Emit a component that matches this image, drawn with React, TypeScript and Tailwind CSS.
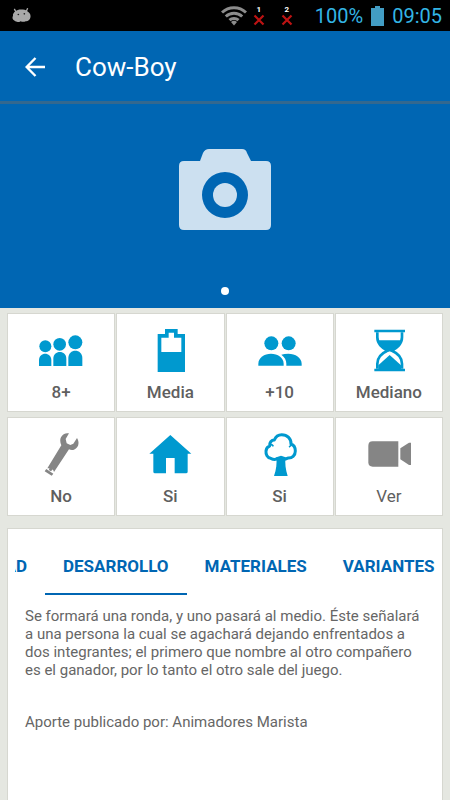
import type { ReactNode } from "react";

const BLUE = "#0099cf";
const GREY = "#858585";

function PeopleIcon() {
  return (
    <svg viewBox="118 87 132 132" className="size-11" fill={BLUE} aria-hidden="true">
      <circle cx="137" cy="139" r="18" />
      <circle cx="180" cy="133" r="19" />
      <circle cx="227" cy="127" r="21" />
      <path d="M118 198v-18c0-12 9-19 18.500-19s18.500 7 18.500 19v18z" />
      <path d="M161 198v-22c0-13 9-20 19.500-20s19.500 7 19.500 20v22z" />
      <path d="M206 198v-24c0-14 10-22 21-22s21 8 21 22v24z" />
    </svg>
  );
}

function BatteryIcon() {
  return (
    <svg viewBox="444 87 132 132" className="size-11" fill={BLUE} aria-hidden="true">
      <path
        fillRule="evenodd"
        d="M495 87h38v15h22v114h-82V102h22zM506 98v15h-22v43h60v-43h-22V98z"
      />
    </svg>
  );
}

function PairIcon() {
  return (
    <svg viewBox="98 87 132 132" className="size-11" fill={BLUE} aria-hidden="true">
      <circle cx="138" cy="130" r="21" />
      <circle cx="190" cy="130" r="21" />
      <path d="M99 197v-6c0-18 18-30 38-30s38 12 38 30v6z" />
      <path d="M168 164c6-2 13-3 21-3 21 0 40 12 40 30v6h-46v-6c0-11-5-20-15-27z" />
    </svg>
  );
}

function HourglassIcon() {
  return (
    <svg viewBox="425 87 132 132" className="size-11" fill={BLUE} aria-hidden="true">
      <path d="M447 89h92v8h-92zM447 206h92v8h-92z" />
      <path
        d="M456 97v15c0 20 14 30 30 40-18 8-30 22-30 39v15M530 97v15c0 20-14 30-30 40 18 8 30 22 30 39v15"
        fill="none"
        stroke={BLUE}
        strokeWidth="8"
      />
      <path d="M457 121h72c-4 15-17 23-28 31h-16c-11-8-24-16-28-31z" />
      <path d="M482 154c6-4 16-4 22 0" fill="none" stroke={BLUE} strokeWidth="7" />
      <path d="M459 207v-11l34-31 34 31v11z" />
    </svg>
  );
}

function WrenchIcon() {
  return (
    <svg viewBox="118 69 132 132" className="size-11" fill={GREY} aria-hidden="true">
      <path d="M208 70l-10 17 3 13 11 5 9-4 11-17c9 15 4 30-9 35-6 2-11 1-15-1l-45 68c-1-7-8-12-20-11l42-69c-4-9-5-19 1-27 5-8 13-11 22-9z" />
      <path d="M140 177l21 14-5 6-21-13z" />
      <circle cx="153" cy="178" r="5" />
    </svg>
  );
}

function HouseIcon() {
  return (
    <svg viewBox="444 69 132 132" className="size-11" fill={BLUE} aria-hidden="true">
      <path d="M511 75l63 56h-11v54q0 5-5 5h-34v-46h-26v46h-33q-5 0-5-5v-54h-12z" />
    </svg>
  );
}

function TreeIcon() {
  return (
    <svg viewBox="98 69 132 132" className="size-11" fill={BLUE} aria-hidden="true">
      <path
        d="M158 145c-7 5-16 3-22 0-10-1-15-12-14-22 1-8 5-13 11-15-1-10 5-18 14-18 4-10 12-16 22-16 17 0 29 12 28 28 8 3 13 11 13 21 0 14-10 22-22 21-6 4-14 4-20 0"
        fill="none"
        stroke={BLUE}
        strokeWidth="9"
        strokeLinejoin="round"
      />
      <path d="M132 105c6-2 10 0 12 4M198 101c0 5-3 8-7 10" fill="none" stroke={BLUE} strokeWidth="5" />
      <path d="M153 142l14-5 14 5c-3 18 0 38 6 56h-41c7-18 9-38 7-56z" />
    </svg>
  );
}

function VideoIcon() {
  return (
    <svg viewBox="425 69 132 132" className="size-11" fill={GREY} aria-hidden="true">
      <path d="M442 94h77v76h-77q-13 0-13-13v-50q0-13 13-13z" />
      <path d="M557 98v67h-6l-26-17v-33l26-17z" />
    </svg>
  );
}

function AndroidIcon() {
  return (
    <svg viewBox="38 26 60 44" className="h-[15px] w-5" fill="#a9a9a9" aria-hidden="true">
      <path d="M45 28l5 10M85 26l-4 9" stroke="#a9a9a9" strokeWidth="4" />
      <path d="M48 36c6-6 14-7 20-6 8-1 14 2 18 7 7 4 9 12 7 18-2 7-8 11-14 10-5 2-10 2-15 0-6 4-14 3-18-1-7-4-8-9-5-15-1-5 2-10 7-13z" />
      <circle cx="57" cy="45" r="2.500" fill="#222" />
      <circle cx="75" cy="43" r="2.500" fill="#222" />
    </svg>
  );
}

function WifiIcon() {
  return (
    <svg viewBox="0 0 26 20" className="h-5 w-[26px]" aria-hidden="true">
      <g fill="none" stroke="#8c8c8c" strokeWidth="3">
        <path d="M1 6.500a17.500 17.500 0 0 1 24 0" />
        <path d="M4.800 10.500a12 12 0 0 1 16.400 0" />
        <path d="M8.500 14.200a6.500 6.500 0 0 1 9 0" />
      </g>
      <path d="M13 19.500l-3-3.500a4.500 4.500 0 0 1 6 0z" fill="#8c8c8c" />
    </svg>
  );
}

function NoSignal({ slot }: { slot: string }) {
  return (
    <span className="flex w-3 flex-col items-center">
      <span className="text-[8px] leading-[8px] font-bold text-white">{slot}</span>
      <svg viewBox="0 0 12 12" className="size-3" aria-hidden="true">
        <path d="M1.500 1.500l9 9M10.500 1.500l-9 9" stroke="#bd1313" strokeWidth="2.200" />
      </svg>
    </span>
  );
}

type Fact = { label: string; icon: ReactNode; light?: boolean };

const facts: Fact[] = [
  { label: "8+", icon: <PeopleIcon /> },
  { label: "Media", icon: <BatteryIcon /> },
  { label: "+10", icon: <PairIcon /> },
  { label: "Mediano", icon: <HourglassIcon /> },
  { label: "No", icon: <WrenchIcon /> },
  { label: "Si", icon: <HouseIcon /> },
  { label: "Si", icon: <TreeIcon /> },
  { label: "Ver", icon: <VideoIcon />, light: true },
];

const tabs = ["DESARROLLO", "MATERIALES", "VARIANTES"];

export default function App() {
  return (
    <div className="flex min-h-screen flex-col bg-[#e5e7e1] font-['Roboto',sans-serif]">
      <div className="flex h-[31px] items-center bg-black pr-2 pl-3 text-xl text-[#33b5e5]">
        <AndroidIcon />
        <div className="ml-auto flex items-center">
          <WifiIcon />
          <div className="mr-[22px] ml-[6px] flex gap-4">
            <NoSignal slot="1" />
            <NoSignal slot="2" />
          </div>
          <span>100%</span>
          <svg viewBox="0 0 13 20" className="mx-2 h-5 w-[13px]" fill="#429dc4" aria-hidden="true">
            <path d="M4 0h5v2h4v18H0V2h4z" />
          </svg>
          <span>09:05</span>
        </div>
      </div>

      <header className="flex h-[73px] items-center border-b-[3px] border-[#33688f] bg-[#0066b3] pt-px pl-[25px] text-white">
        <button type="button" aria-label="Volver" className="mr-[30px]">
          <svg viewBox="0 0 20 20" className="size-5" fill="none" stroke="white" strokeWidth="2.400" aria-hidden="true">
            <path d="M20 10H2M10.500 1L1.600 10l8.900 9" />
          </svg>
        </button>
        <h1 className="text-[26px] leading-8">Cow-Boy</h1>
      </header>

      <section className="flex h-[204px] flex-col items-center bg-[#0066b3] pt-[45px]">
        <svg viewBox="0 0 92 81" className="h-[81px] w-[92px]" fill="#cce0f0" aria-hidden="true">
          <path
            fillRule="evenodd"
            d="M5 12h16l3-8q2-4 6-4h33q4 0 5 4l4 8h15q5 0 5 5v59q0 5-5 5H5q-5 0-5-5V17q0-5 5-5zM46 23a23 23 0 1 0 0 46a23 23 0 1 0 0-46z"
          />
          <circle cx="46" cy="46" r="12" />
        </svg>
        <span className="mt-auto mb-[13px] size-2 rounded-full bg-white" />
      </section>

      <main className="flex grow flex-col px-[7px] pt-[5px]">
        <div className="grid grid-cols-4 gap-x-px gap-y-[5px]">
          {facts.map((fact, i) => (
            <div
              key={i}
              className="flex h-[99px] flex-col items-center border border-[#d6d7d0] bg-white pt-[15px] text-[17px] text-[#5f5f5f]"
            >
              {fact.icon}
              <span className={fact.light ? "mt-[7px] leading-6" : "mt-[7px] leading-6 font-medium"}>{fact.label}</span>
            </div>
          ))}
        </div>

        <section className="mt-3 grow border border-b-0 border-[#d6d7d0] bg-white">
          <div role="tablist" className="mx-[7px] flex overflow-hidden pt-[10px] text-[17px] font-bold text-[#0066b3]">
            <button type="button" role="tab" className="flex h-14 w-[30px] shrink-0 items-center justify-end overflow-hidden pr-[18px]">
              AD
            </button>
            {tabs.map((tab, i) => (
              <button
                key={tab}
                type="button"
                role="tab"
                aria-selected={i === 0}
                className={
                  i === 0
                    ? "h-14 shrink-0 border-b-2 border-[#0066b3] px-[18px] pt-[2px]"
                    : "h-14 shrink-0 border-b-2 border-transparent px-[18px] pt-[2px]"
                }
              >
                {tab}
              </button>
            ))}
          </div>
          <div className="px-[17px] pt-3 text-[15px] leading-[18px] text-[#666666]">
            <p>
              Se formará una ronda, y uno pasará al medio. Éste señalará
              a una persona la cual se agachará dejando enfrentados a
              dos integrantes; el primero que nombre al otro compañero
              es el ganador, por lo tanto el otro sale del juego.
            </p>
            <p className="mt-[34px]">Aporte publicado por: Animadores Marista</p>
          </div>
        </section>
      </main>
    </div>
  );
}
